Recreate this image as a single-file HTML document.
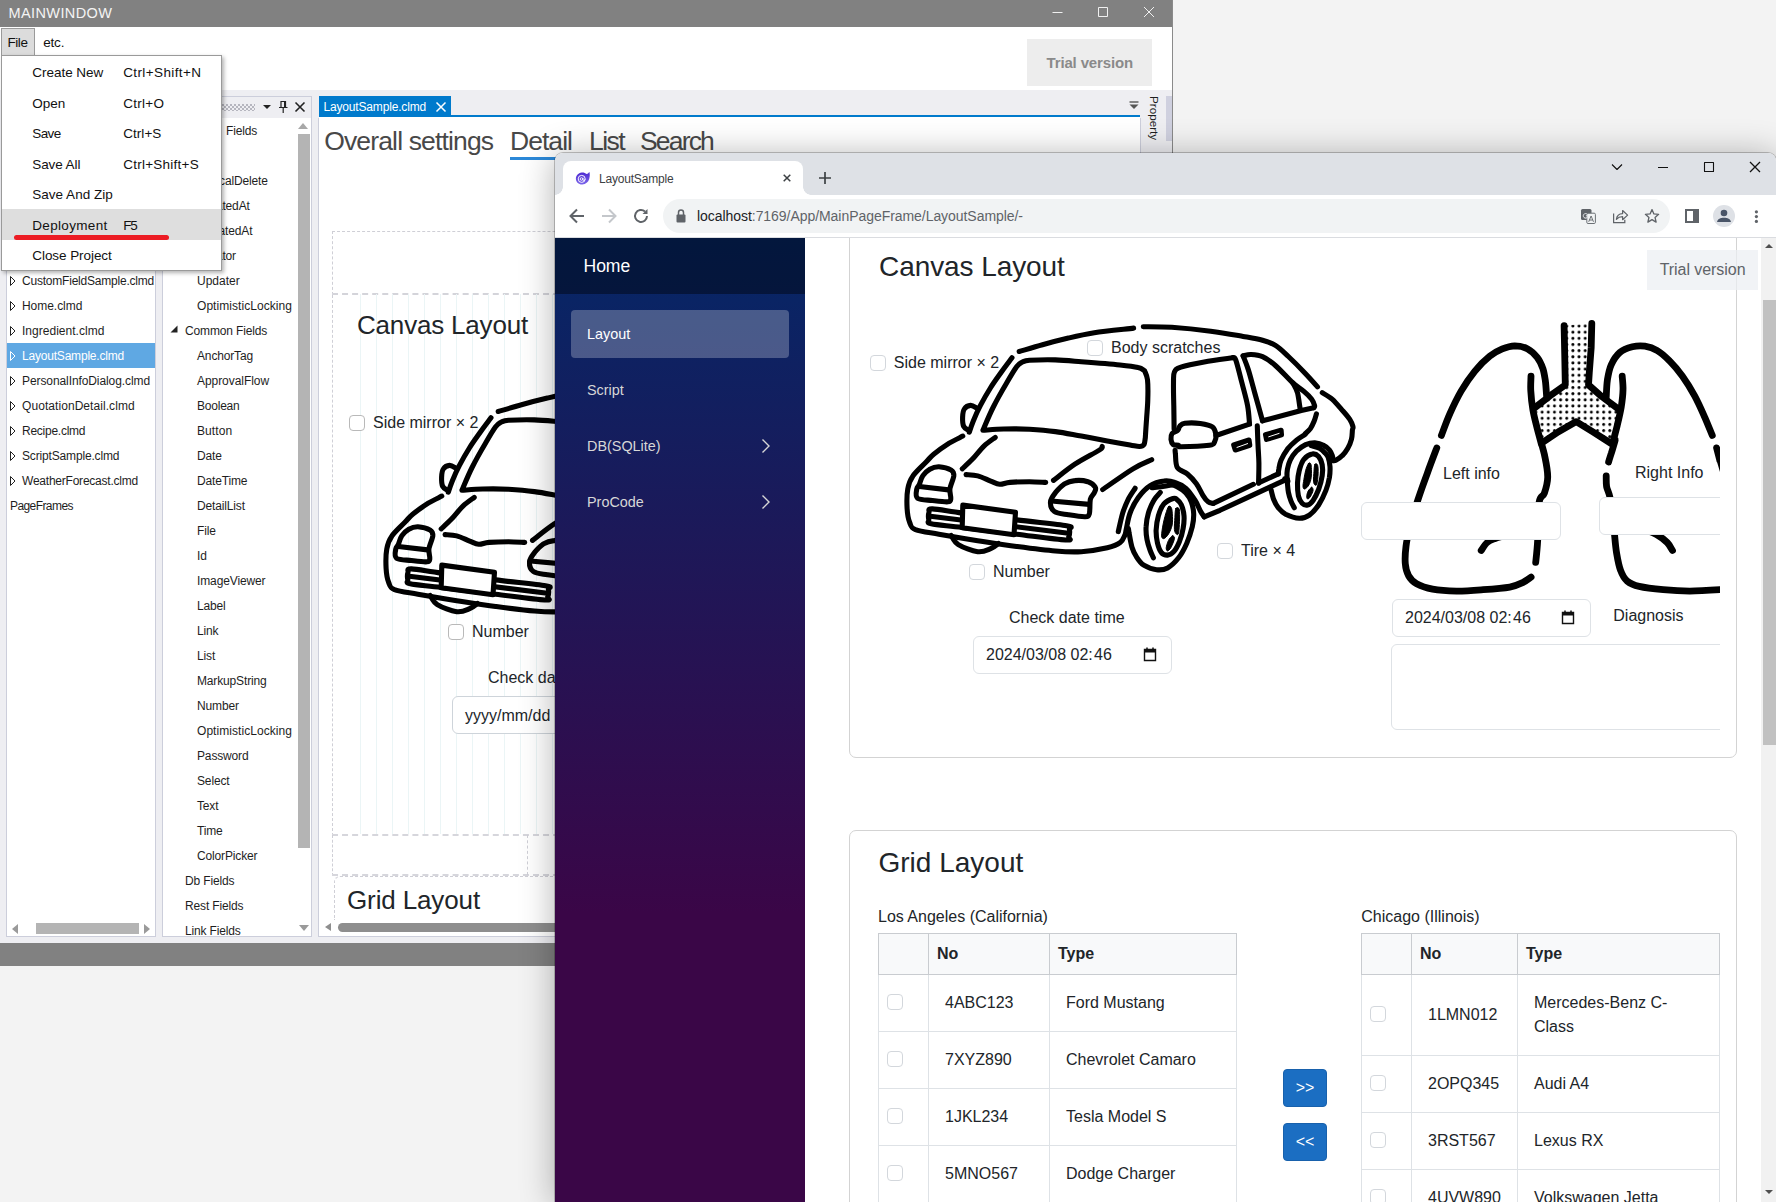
<!DOCTYPE html>
<html lang="en">
<head>
<meta charset="utf-8">
<title>LayoutSample</title>
<style>
*{box-sizing:border-box}
html,body{margin:0;padding:0;overflow:hidden}
body{width:1776px;height:1202px;overflow:hidden;background:#f3f3f3;position:relative;font-family:"Liberation Sans",sans-serif;color:#1e1e1e}
.a{position:absolute}
.t{position:absolute;white-space:nowrap;line-height:1}
/* ---------- WPF window ---------- */
#wpf{position:absolute;left:0;top:0;width:1173px;height:966px;background:#eeeef2;overflow:hidden;border-right:1px solid #8a8a8a}
#wtitle{position:absolute;left:0;top:0;width:1173px;height:27px;background:#818181}
#wmenu{position:absolute;left:0;top:27px;width:1172px;height:63px;background:#fff}
#wstatus{position:absolute;left:0;top:943px;width:1173px;height:23px;background:#818181}
.w{position:absolute;white-space:nowrap;line-height:1;font-size:12px;letter-spacing:-0.15px;color:#1e1e1e}
.m{position:absolute;white-space:nowrap;line-height:1;font-size:13.5px;color:#111}
.panel{position:absolute;background:#fff;border:1px solid #cccedb}
.tri{position:absolute;width:0;height:0;border-style:solid}
/* ---------- Chrome ---------- */
#chrome{position:absolute;left:555px;top:153px;width:1221px;height:1049px;background:#fff;border-radius:8px 8px 0 0;box-shadow:0 3px 34px 1px rgba(0,0,0,.30),0 0 0 1px rgba(0,0,0,.22);overflow:hidden}
#cstrip{position:absolute;left:0;top:0;width:1221px;height:43px;background:#dee1e6}
#ctab{position:absolute;left:9px;top:9px;width:240px;height:34px;background:#fff;border-radius:8px 8px 0 0}
#ctool{position:absolute;left:0;top:43px;width:1221px;height:42px;background:#fff;border-bottom:1px solid #d5d7da}
#curl{position:absolute;left:108px;top:5px;width:1006px;height:32px;border-radius:16px;background:#f1f3f4}
#page{position:absolute;left:0;top:86px;width:1221px;height:964px;background:#fff;overflow:hidden;font-size:16px;color:#212529}
#side{position:absolute;left:0;top:0;width:250px;height:964px;background:linear-gradient(180deg,#052767 0%,#3a0647 70%)}
#sidetop{position:absolute;left:0;top:0;width:250px;height:56px;background:rgba(0,0,0,.4)}
.nav{position:absolute;left:32px;color:#d7d7d7;font-size:14.4px;line-height:1;white-space:nowrap}
.card{position:absolute;border:1px solid #d3d3d3;border-radius:7px;background:#fff}
.cb{position:absolute;width:16px;height:16px;border:1px solid #d3d7dc;border-radius:4px;background:#fff}
.inp{position:absolute;border:1px solid #dee2e6;border-radius:6px;background:#fff}
.p{position:absolute;white-space:nowrap;line-height:1;font-size:16px;color:#212529}
.btn{position:absolute;width:44px;height:38px;background:#1b6ec2;border:1px solid #1861ac;border-radius:4px;color:#fff;font-size:16px;line-height:36px;text-align:center}
table.g{position:absolute;border-collapse:collapse;table-layout:fixed;font-size:16px;color:#212529}
table.g td,table.g th{border:1px solid #dee2e6;padding:0 0 0 16px;text-align:left;vertical-align:middle;line-height:24px}
table.g th{background:#f8f9fa;height:41px;border-color:#c9ccd0;padding-left:8px;font-weight:bold}
table.g tr.r td{height:57px}
table.g .c{padding:0}
</style>
</head>
<body>

<svg width="0" height="0" style="position:absolute"><defs>
<g id="car" fill="none" stroke="#000" stroke-width="5.1" stroke-linecap="round" stroke-linejoin="round">
<path d="M1019.2,351.5 C1023.1,350.4 1034.3,347.0 1042.5,344.8 C1050.7,342.5 1059.8,340.1 1068.4,338.1 C1077.0,336.0 1083.4,334.4 1094.3,332.7 C1105.2,331.1 1127.1,328.9 1133.6,328.1"/>
<path d="M1143.3,326.7 C1148.1,326.8 1160.6,326.6 1171.8,327.3 C1183.0,328.1 1198.8,329.7 1210.7,331.2 C1222.5,332.7 1234.4,334.9 1243.1,336.4 C1251.7,337.9 1257.1,338.7 1262.5,340.3 C1267.9,341.8 1271.1,342.7 1275.4,345.4 C1279.8,348.1 1283.6,352.0 1288.4,356.5 C1293.1,360.9 1299.1,366.9 1303.9,372.0 C1308.8,377.1 1315.3,384.4 1317.5,386.9"/>
<path d="M1322.3,392.7 C1324.0,393.8 1329.2,396.5 1332.4,399.3 C1335.6,402.1 1338.6,406.0 1341.5,409.4 C1344.4,412.7 1347.9,416.5 1349.8,419.4 C1351.7,422.3 1352.5,425.0 1353.0,426.8 C1353.4,428.5 1352.7,427.9 1352.4,430.0 C1352.2,432.1 1352.3,436.1 1351.5,439.1 C1350.7,442.2 1349.4,445.6 1347.8,448.3 C1346.3,451.0 1344.3,453.6 1342.3,455.6 C1340.4,457.6 1337.5,459.4 1335.9,460.2 C1334.4,461.0 1333.7,460.6 1333.2,460.6"/>
<path d="M1333.2,460.6 C1333.0,459.8 1332.9,457.4 1332.3,455.6 C1331.7,453.9 1330.9,451.8 1329.5,450.1 C1328.2,448.5 1326.5,446.8 1324.0,445.6 C1321.6,444.3 1317.9,443.0 1314.9,442.8 C1311.8,442.7 1308.8,443.3 1305.7,444.6 C1302.7,446.0 1299.2,448.5 1296.6,451.0 C1294.0,453.6 1291.7,457.1 1290.2,460.2 C1288.7,463.2 1288.0,466.4 1287.4,469.3 C1286.9,472.2 1286.9,475.6 1287.0,477.6 C1287.1,479.6 1287.8,480.6 1287.9,481.2"/>
<path d="M1316.4,413.9 C1316.0,415.2 1315.1,418.8 1314.1,421.3 C1313.1,423.7 1311.9,426.4 1310.4,428.6 C1308.9,430.7 1305.9,433.1 1304.9,434.1 C1304.0,435.1 1306.2,433.6 1304.8,434.6 C1303.4,435.6 1299.5,437.6 1296.6,440.1 C1293.7,442.5 1290.0,445.9 1287.4,449.2 C1284.9,452.6 1282.5,456.8 1281.0,460.2 C1279.6,463.5 1279.2,467.1 1278.8,469.3 C1278.3,471.6 1278.4,473.2 1278.3,473.9"/>
<path d="M1278.3,473.9 L1260.0,482.2 L1258.6,483.0"/>
<path d="M1287.1,479.1 L1284.7,478.9"/>
<path d="M1012.0,357.7 C1010.4,359.9 1005.9,365.7 1002.3,370.7 C998.8,375.7 994.3,381.7 990.7,387.5 C987.0,393.4 983.2,400.1 980.3,405.7 C977.4,411.3 975.0,416.8 973.2,421.2 C971.4,425.6 969.9,430.4 969.3,432.2"/>
<path d="M977.7,408.5 C976.5,408.0 972.8,405.3 970.6,405.4 C968.4,405.5 965.7,406.9 964.4,408.9 C963.0,410.9 962.7,414.4 962.6,417.3 C962.5,420.2 962.7,424.2 963.7,426.4 C964.7,428.6 967.8,429.6 968.7,430.3"/>
<path d="M982.9,430.3 C984.6,426.4 989.4,414.7 993.3,407.0 C997.2,399.2 1002.3,390.3 1006.2,383.7 C1010.1,377.0 1013.9,370.4 1016.6,366.8 C1019.3,363.2 1021.4,362.7 1022.4,361.9 L1022.4,361.9 C1023.6,361.6 1024.0,360.7 1029.5,360.3 C1035.0,360.0 1046.8,359.7 1055.4,359.9 C1064.1,360.2 1070.6,360.9 1081.3,361.8 C1092.1,362.6 1110.5,364.0 1120.0,365.0 C1129.5,366.0 1134.0,366.6 1138.1,367.6 C1142.2,368.5 1143.5,370.2 1144.6,370.7 L1144.6,370.7 C1145.1,372.2 1146.9,375.0 1147.5,379.8 C1148.0,384.5 1148.0,392.7 1147.8,399.2 C1147.7,405.7 1147.0,412.2 1146.6,418.6 C1146.1,425.1 1145.5,434.8 1145.3,438.1 L1145.3,438.1 C1145.0,439.1 1144.9,443.1 1144.0,444.5 C1143.0,445.9 1141.7,446.4 1139.4,446.5 C1137.1,446.5 1135.4,445.9 1130.1,444.9 C1124.7,444.0 1115.4,442.4 1107.3,440.9 C1099.1,439.4 1090.0,437.7 1081.3,436.1 C1072.7,434.6 1064.1,432.7 1055.4,431.6 C1046.8,430.4 1038.2,429.7 1029.5,429.2 C1020.9,428.8 1011.4,428.8 1003.6,429.0 C995.9,429.2 986.4,430.1 982.9,430.3 Z" fill="#fff"/>
<path d="M962.8,436.1 C960.6,437.3 954.1,440.2 949.2,443.2 C944.4,446.3 937.6,451.1 933.7,454.2 C929.8,457.4 929.4,458.7 925.9,462.3 C922.5,465.9 916.0,471.5 913.0,475.9 C909.9,480.3 908.7,483.5 907.8,488.9 C906.8,494.3 906.8,502.7 907.1,508.3 C907.4,513.9 908.3,519.0 909.7,522.5 C911.1,526.1 910.7,527.7 915.5,529.7 C920.4,531.6 928.5,532.4 938.9,534.2 C949.2,536.0 964.8,538.6 977.7,540.7 C990.7,542.7 1003.6,544.8 1016.6,546.5 C1029.5,548.2 1044.6,550.2 1055.4,551.0 C1066.2,551.9 1072.7,552.2 1081.3,551.7 C1090.0,551.1 1100.8,549.3 1107.3,547.8 C1113.7,546.3 1117.2,544.9 1120.2,542.6 C1123.2,540.3 1124.5,535.6 1125.4,534.2"/>
<path d="M995.2,437.4 C993.4,438.8 988.0,442.2 984.2,445.8 C980.4,449.4 976.2,455.2 972.5,459.1 C968.9,462.9 963.9,467.2 962.2,468.8"/>
<path d="M1102.1,446.5 C1101.6,447.1 1104.0,447.0 1099.5,450.0 C1094.9,453.0 1082.5,459.2 1074.9,464.2 C1067.2,469.3 1057.1,477.7 1053.5,480.4"/>
<path d="M966.1,474.6 C968.0,474.8 973.6,474.8 977.7,475.9 C981.8,477.0 987.0,479.7 990.7,481.1 C994.3,482.5 996.5,484.1 999.7,484.3 C1003.0,484.5 1005.1,482.8 1010.1,482.4 C1015.1,482.0 1023.6,481.7 1029.5,481.7 C1035.5,481.7 1043.0,482.3 1045.7,482.4"/>
<path d="M1151.7,459.7 C1148.6,461.2 1141.1,463.8 1133.0,468.8 C1124.8,473.7 1107.8,486.1 1102.7,489.5"/>
<path d="M919.4,484.3 C920.4,482.2 920.9,478.4 922.7,475.9 C924.4,473.4 927.1,470.7 929.8,469.2 C932.5,467.7 935.3,466.7 938.9,466.8 C942.4,467.0 948.7,468.6 951.2,470.1 C953.6,471.6 954.0,472.8 953.8,475.9 C953.5,479.0 950.4,485.1 949.9,488.9 C949.4,492.6 951.1,496.4 950.8,498.6 C950.5,500.7 951.0,501.5 947.9,501.8 C944.9,502.1 937.5,501.1 932.4,500.5 C927.3,499.9 920.1,500.1 917.5,498.2 C914.9,496.2 916.5,491.2 916.8,488.9 C917.2,486.6 918.5,486.5 919.4,484.3Z"/>
<path d="M919.4,486.5 L948.6,489.9"/>
<path d="M1050.5,501.8 C1050.7,498.7 1053.1,495.7 1055.4,492.7 C1057.8,489.8 1061.3,486.0 1064.5,483.9 C1067.7,481.9 1071.0,480.9 1074.9,480.6 C1078.8,480.2 1084.4,480.6 1087.8,481.7 C1091.2,482.9 1094.3,485.5 1095.3,487.3 C1096.4,489.1 1095.1,490.8 1094.3,492.7 C1093.5,494.7 1091.2,495.8 1090.4,499.2 C1089.6,502.7 1090.2,510.6 1089.4,513.5 C1088.5,516.4 1088.7,516.5 1085.2,516.7 C1081.7,516.9 1073.5,515.6 1068.4,514.8 C1063.3,513.9 1057.4,513.7 1054.4,511.5 C1051.4,509.4 1050.3,504.9 1050.5,501.8Z"/>
<path d="M1054.1,501.2 L1089.1,504.4"/>
<path d="M932.4,508.9 C937.9,509.1 948.1,511.2 962.2,513.1 C976.2,514.9 999.2,517.8 1016.6,519.9 C1034.0,522.1 1057.6,524.2 1066.5,525.8 C1075.3,527.3 1069.0,527.4 1069.4,529.3 C1069.8,531.2 1069.4,535.3 1068.8,537.0 C1068.1,538.8 1074.2,540.5 1065.5,540.0 C1056.8,539.6 1033.8,536.3 1016.6,534.2 C999.4,532.1 976.4,529.2 962.2,527.5 C948.0,525.7 936.9,525.1 931.3,523.8 C925.8,522.6 929.1,521.9 928.8,519.9 C928.4,518.0 928.4,514.0 929.0,512.2 C929.6,510.3 926.9,508.8 932.4,508.9Z"/>
<path d="M930.4,516.3 L1068.4,533.2"/>
<path d="M962.8,505.1 L1015.5,512.2 L1014.0,534.8 L962.2,527.7Z" fill="#fff"/>
<path d="M951.2,535.5 C952.4,537.0 953.9,541.9 958.3,544.6 C962.7,547.3 972.3,551.0 977.7,551.7 C983.1,552.4 987.2,550.1 990.7,548.7 C994.1,547.3 997.2,544.4 998.4,543.5"/>
<path d="M1135.1,488.3 C1134.0,490.1 1130.3,495.2 1128.2,499.3 C1126.2,503.4 1124.4,507.6 1122.7,513.0 C1121.1,518.4 1119.0,528.5 1118.3,531.6"/>
<path d="M1125.4,534.2 C1125.6,533.3 1125.6,532.1 1126.4,528.6 C1127.2,525.0 1128.1,518.2 1130.1,513.0 C1132.0,507.8 1134.9,502.0 1138.3,497.4 C1141.7,492.9 1145.9,488.3 1150.2,485.6 C1154.5,482.8 1159.8,481.5 1163.9,481.0 C1168.0,480.4 1171.2,481.1 1174.9,482.4 C1178.6,483.6 1182.5,485.3 1185.9,488.3 C1189.2,491.3 1192.6,496.4 1195.0,500.2 C1197.5,504.0 1199.0,508.4 1200.5,511.2 C1202.0,513.9 1203.6,515.9 1204.2,516.8"/>
<path d="M1204.2,516.8 L1220.0,510.3 L1287.1,479.1"/>
<path d="M1128.4,528.6 C1128.5,529.3 1128.6,530.1 1129.1,533.1 C1129.7,536.2 1130.7,542.9 1131.9,546.9 C1133.1,550.8 1134.5,553.9 1136.5,556.9 C1138.5,560.0 1140.4,563.0 1143.8,565.2 C1147.1,567.3 1152.6,569.3 1156.6,569.7 C1160.6,570.2 1163.9,569.9 1167.6,567.9 C1171.2,565.9 1175.4,561.9 1178.6,557.8 C1181.8,553.7 1184.5,548.4 1186.8,543.2 C1189.1,538.0 1191.1,531.6 1192.3,526.7 C1193.4,521.8 1193.8,518.0 1193.7,513.9 C1193.5,509.8 1192.7,505.5 1191.4,502.0 C1190.1,498.5 1188.3,495.5 1185.9,492.9 C1183.4,490.3 1179.5,488.0 1176.7,486.5 C1174.0,485.0 1170.6,484.3 1169.4,483.9"/>
<path d="M1152.0,487.6 C1153.5,487.4 1158.0,487.2 1161.2,486.7 C1164.4,486.3 1169.6,485.4 1171.2,485.1"/>
<path d="M1160.3,492.4 C1159.2,493.7 1155.8,496.8 1153.9,500.2 C1151.9,503.6 1149.7,508.6 1148.4,513.0 C1147.1,517.4 1146.3,522.3 1146.1,526.7 C1145.8,531.1 1146.3,535.6 1147.0,539.5 C1147.7,543.5 1149.1,547.5 1150.2,550.5 C1151.3,553.6 1152.9,556.6 1153.4,557.8"/>
<path d="M1173.1,498.5 C1170.9,499.3 1166.4,501.0 1163.9,503.9 C1161.5,506.7 1159.7,511.3 1158.4,515.7 C1157.1,520.2 1156.3,525.8 1156.1,530.4 C1156.0,535.0 1156.7,539.5 1157.5,543.2 C1158.4,546.9 1159.5,550.4 1161.2,552.3 C1162.8,554.3 1165.4,555.2 1167.6,555.1 C1169.7,554.9 1172.0,553.7 1174.0,551.4 C1176.0,549.1 1177.9,545.2 1179.5,541.4 C1181.0,537.6 1182.4,532.8 1183.1,528.6 C1183.9,524.3 1184.3,519.7 1184.0,515.7 C1183.7,511.8 1182.5,507.5 1181.3,504.8 C1180.1,502.0 1178.1,500.3 1176.7,499.3 C1175.4,498.2 1175.2,497.8 1173.1,498.5Z"/>
<path d="M1168.5,506.6 C1167.6,507.7 1166.7,510.9 1165.7,513.9 C1164.8,517.0 1163.7,521.2 1163.0,524.9 C1162.3,528.6 1161.5,533.6 1161.6,535.9 C1161.8,538.2 1162.8,538.9 1163.9,538.6 C1165.1,538.3 1167.1,536.3 1168.5,534.0 C1169.9,531.8 1171.5,528.2 1172.2,524.9 C1172.8,521.5 1172.5,516.8 1172.3,513.9 C1172.2,511.0 1171.9,508.7 1171.2,507.5 C1170.6,506.3 1169.4,505.5 1168.5,506.6Z" stroke-width="1" fill="#000"/>
<path d="M1175.8,508.4 C1175.1,509.8 1175.1,514.1 1174.9,517.6 C1174.7,521.1 1174.2,526.7 1174.4,529.5 C1174.7,532.2 1175.6,533.4 1176.3,534.0 C1177.0,534.7 1178.0,535.3 1178.6,533.1 C1179.1,531.0 1179.3,525.2 1179.5,521.2 C1179.6,517.3 1179.9,511.5 1179.3,509.3 C1178.7,507.2 1176.5,507.1 1175.8,508.4Z" stroke-width="1" fill="#000"/>
<path d="M1172.2,535.9 C1171.2,536.4 1169.5,538.5 1168.5,540.4 C1167.5,542.4 1166.4,546.0 1166.2,547.8 C1166.1,549.5 1166.8,551.0 1167.6,551.0 C1168.3,551.0 1169.7,549.5 1170.8,547.8 C1171.8,546.0 1173.4,542.2 1174.0,540.4 C1174.6,538.7 1174.7,538.0 1174.4,537.2 C1174.1,536.5 1173.1,535.3 1172.2,535.9Z" stroke-width="1" fill="#000"/>
<path d="M1175.1,450.4 C1175.1,450.9 1175.1,451.0 1175.4,453.9 C1175.8,456.7 1175.3,464.1 1177.3,467.5 C1179.2,470.8 1184.2,471.3 1187.4,474.0 C1190.6,476.7 1193.8,480.1 1196.4,483.7 C1199.0,487.2 1201.0,492.3 1202.9,495.3 C1204.8,498.4 1206.4,500.5 1208.1,501.8 C1209.8,503.2 1212.4,503.1 1213.3,503.4"/>
<path d="M1213.3,503.4 L1253.4,484.3"/>
<path d="M1257.3,425.8 C1257.4,428.9 1257.7,438.3 1258.0,444.5 C1258.2,450.7 1258.8,456.5 1258.9,463.0 C1259.0,469.4 1258.6,479.7 1258.6,483.0"/>
<path d="M1232.7,357.7 C1227.9,358.4 1212.8,360.3 1204.2,361.9 C1195.6,363.4 1185.8,365.4 1180.9,367.1 C1175.9,368.8 1175.6,369.4 1174.4,372.0 C1173.2,374.5 1173.6,376.7 1173.5,382.4 C1173.4,388.0 1173.6,397.9 1173.8,405.7 C1173.9,413.4 1174.1,425.1 1174.1,429.0"/>
<path d="M1232.7,357.7 C1233.2,358.2 1234.4,356.2 1235.9,360.3 C1237.4,364.4 1239.8,374.8 1241.8,382.4 C1243.7,389.9 1246.3,398.8 1247.6,405.7 C1248.9,412.6 1249.2,420.8 1249.5,423.8"/>
<path d="M1249.5,424.2 L1215.9,435.5"/>
<path d="M1215.9,434.8 C1215.5,432.3 1215.2,428.9 1212.6,427.0 C1210.0,425.2 1205.0,424.2 1200.3,423.5 C1195.7,422.9 1188.2,422.9 1184.8,423.3 C1181.4,423.7 1181.0,424.9 1179.8,426.1 C1178.7,427.3 1178.9,429.3 1177.6,430.5 C1176.3,431.8 1173.2,432.1 1172.1,433.5 C1171.0,435.0 1170.9,437.5 1171.0,439.4 C1171.2,441.2 1171.9,443.5 1173.1,444.5 C1174.3,445.5 1177.0,444.9 1178.3,445.3 C1179.6,445.7 1176.0,446.7 1181.1,446.7 C1186.3,446.7 1203.8,446.1 1209.4,445.3 C1214.9,444.5 1213.5,443.7 1214.6,441.9 C1215.6,440.2 1216.2,437.3 1215.9,434.8Z"/>
<path d="M1243.1,355.8 C1244.4,355.6 1247.6,354.4 1250.8,354.5 C1254.1,354.7 1258.4,354.9 1262.5,356.7 C1266.6,358.5 1270.5,361.2 1275.4,365.5 C1280.4,369.8 1287.5,378.0 1292.3,382.4 C1297.0,386.7 1300.7,388.6 1303.9,391.4 C1307.2,394.2 1309.9,396.8 1311.7,399.2 C1313.5,401.6 1314.2,404.2 1314.6,405.7 C1314.9,407.1 1313.8,407.4 1313.7,407.7"/>
<path d="M1313.7,407.7 L1301.3,410.5 L1262.5,420.8"/>
<path d="M1262.5,420.8 C1261.2,416.1 1257.1,401.3 1254.7,392.7 C1252.3,384.1 1250.2,375.6 1248.2,369.4 C1246.3,363.3 1243.9,358.1 1243.1,355.8"/>
<path d="M1292.9,383.0 C1293.7,384.6 1296.3,388.5 1297.5,392.7 C1298.6,397.0 1299.6,405.9 1300.1,408.5"/>
<path d="M1233.7,444.9 L1249.0,440.0 L1249.8,445.3 L1235.3,450.0Z" fill="#000"/>
<path d="M1237.0,447.4 L1247.6,443.6" stroke-width="1" stroke="#fff"/>
<path d="M1265.5,434.6 L1281.1,430.3 L1281.5,434.9 L1266.5,439.4Z" fill="#000"/>
<path d="M1268.7,436.8 L1279.1,433.4" stroke-width="1" stroke="#fff"/>
<path d="M1311.2,445.7 C1312.6,446.2 1317.2,447.1 1319.5,448.3 C1321.8,449.5 1323.5,451.3 1325.0,452.9 C1326.4,454.4 1327.3,455.2 1328.2,457.4 C1329.0,459.7 1329.8,463.2 1330.0,466.6 C1330.2,470.0 1330.0,473.6 1329.4,477.6 C1328.7,481.5 1327.7,485.8 1325.9,490.4 C1324.1,495.0 1321.3,500.9 1318.6,505.0 C1315.8,509.1 1312.6,512.9 1309.4,515.1 C1306.2,517.3 1303.3,518.4 1299.3,518.3 C1295.4,518.1 1289.1,515.9 1285.6,514.2 C1282.1,512.4 1280.3,510.2 1278.3,507.8 C1276.3,505.3 1274.9,502.6 1273.7,499.5 C1272.5,496.5 1271.4,491.1 1271.0,489.5"/>
<path d="M1287.4,483.1 C1287.6,484.6 1287.8,489.2 1288.4,492.2 C1289.0,495.3 1290.1,498.8 1291.1,501.4 C1292.1,504.0 1293.8,506.7 1294.3,507.8"/>
<path d="M1312.2,454.0 C1309.7,454.4 1306.1,456.6 1303.9,459.3 C1301.8,462.0 1300.4,466.3 1299.3,470.3 C1298.3,474.2 1297.7,478.8 1297.5,483.1 C1297.4,487.3 1297.7,492.5 1298.4,495.9 C1299.2,499.2 1300.6,501.7 1302.1,503.2 C1303.6,504.7 1305.7,505.5 1307.6,505.0 C1309.4,504.6 1311.2,503.0 1313.1,500.4 C1314.9,497.9 1317.0,493.6 1318.6,489.5 C1320.1,485.4 1321.6,479.9 1322.2,475.7 C1322.8,471.6 1322.8,468.0 1322.2,464.8 C1321.6,461.6 1320.2,458.3 1318.6,456.5 C1316.9,454.7 1314.6,453.5 1312.2,454.0Z"/>
<path d="M1308.5,463.4 C1307.7,464.5 1306.5,467.6 1305.7,470.3 C1305.0,472.9 1304.4,476.7 1303.9,479.4 C1303.5,482.2 1302.8,485.1 1303.0,486.7 C1303.2,488.3 1303.8,489.3 1304.8,489.0 C1305.8,488.7 1307.9,486.8 1308.9,484.9 C1310.0,483.0 1310.8,480.2 1311.2,477.6 C1311.6,475.0 1311.5,471.6 1311.4,469.3 C1311.3,467.1 1311.3,464.8 1310.8,463.9 C1310.3,462.9 1309.3,462.3 1308.5,463.4Z" stroke-width="1" fill="#000"/>
<path d="M1314.9,464.3 C1314.3,465.3 1314.2,468.4 1314.0,471.2 C1313.8,474.0 1313.4,478.9 1313.5,481.2 C1313.7,483.5 1314.3,484.4 1314.9,484.9 C1315.5,485.4 1316.4,485.8 1316.9,484.0 C1317.4,482.2 1318.0,477.0 1318.1,473.9 C1318.2,470.8 1318.2,466.8 1317.6,465.2 C1317.1,463.6 1315.5,463.3 1314.9,464.3Z" stroke-width="1" fill="#000"/>
<path d="M1311.7,487.2 C1310.9,487.3 1308.9,489.7 1308.0,491.3 C1307.2,492.9 1306.7,495.5 1306.7,496.8 C1306.7,498.1 1307.3,499.2 1308.0,499.1 C1308.7,498.9 1309.9,497.3 1310.8,495.9 C1311.6,494.4 1312.9,491.8 1313.1,490.4 C1313.2,488.9 1312.5,487.0 1311.7,487.2Z" stroke-width="1" fill="#000"/>
</g></defs></svg>
<div id="wpf">
<div id="wtitle"></div>
<div class="t" style="left:8.4px;top:5.9px;font-size:14.5px;letter-spacing:0.413px;color:#f4f4f4;">MAINWINDOW</div>
<svg class="a" style="left:1040px;top:0" width="130" height="27" fill="none" stroke="#f0f0f0" stroke-width="1"><path d="M12.5,12.5h10M58.5,7.5h9v9h-9zM104,7l10,10M114,7l-10,10"/></svg>
<div id="wmenu"></div>
<div class="a" style="left:1027px;top:39px;width:125px;height:47px;background:#ededed"></div>
<div class="t" style="left:1046.5px;top:55.3px;font-size:15px;letter-spacing:-0.144px;color:#8a8a8a;font-weight:bold;">Trial version</div>
<div class="a" style="left:1px;top:28px;width:34px;height:28px;background:#dcdcdc;border:1px solid #9a9a9a"></div>
<div class="m" style="left:7.4px;top:35.9px;font-size:13.5px;letter-spacing:-0.413px;">File</div>
<div class="m" style="left:43.2px;top:35.9px;font-size:13.5px;letter-spacing:-0.190px;">etc.</div>
<div class="panel" style="left:6px;top:96px;width:150px;height:841px"></div>
<div class="a" style="left:7px;top:343px;width:148px;height:25px;background:#5fa8e3"></div>
<div class="w" style="left:22.0px;top:274.8px;font-size:12px;letter-spacing:-0.214px;">CustomFieldSample.clmd</div>
<svg class="a" style="left:9px;top:275px" width="8" height="12" fill="none" stroke="#222" stroke-width="1"><path d="M1.5,1.5v9l4.5,-4.5z"/></svg>
<div class="w" style="left:22.0px;top:299.8px;font-size:12px;letter-spacing:-0.042px;">Home.clmd</div>
<svg class="a" style="left:9px;top:300px" width="8" height="12" fill="none" stroke="#222" stroke-width="1"><path d="M1.5,1.5v9l4.5,-4.5z"/></svg>
<div class="w" style="left:22.0px;top:324.8px;font-size:12px;letter-spacing:0.024px;">Ingredient.clmd</div>
<svg class="a" style="left:9px;top:325px" width="8" height="12" fill="none" stroke="#222" stroke-width="1"><path d="M1.5,1.5v9l4.5,-4.5z"/></svg>
<div class="w" style="left:22.0px;top:349.8px;font-size:12px;letter-spacing:-0.199px;color:#fff;">LayoutSample.clmd</div>
<svg class="a" style="left:9px;top:350px" width="8" height="12" fill="none" stroke="#fff" stroke-width="1"><path d="M1.5,1.5v9l4.5,-4.5z"/></svg>
<div class="w" style="left:22.0px;top:374.8px;font-size:12px;letter-spacing:-0.090px;">PersonalInfoDialog.clmd</div>
<svg class="a" style="left:9px;top:375px" width="8" height="12" fill="none" stroke="#222" stroke-width="1"><path d="M1.5,1.5v9l4.5,-4.5z"/></svg>
<div class="w" style="left:22.0px;top:399.8px;font-size:12px;letter-spacing:0.066px;">QuotationDetail.clmd</div>
<svg class="a" style="left:9px;top:400px" width="8" height="12" fill="none" stroke="#222" stroke-width="1"><path d="M1.5,1.5v9l4.5,-4.5z"/></svg>
<div class="w" style="left:22.0px;top:424.8px;font-size:12px;letter-spacing:-0.257px;">Recipe.clmd</div>
<svg class="a" style="left:9px;top:425px" width="8" height="12" fill="none" stroke="#222" stroke-width="1"><path d="M1.5,1.5v9l4.5,-4.5z"/></svg>
<div class="w" style="left:22.0px;top:449.8px;font-size:12px;letter-spacing:-0.161px;">ScriptSample.clmd</div>
<svg class="a" style="left:9px;top:450px" width="8" height="12" fill="none" stroke="#222" stroke-width="1"><path d="M1.5,1.5v9l4.5,-4.5z"/></svg>
<div class="w" style="left:22.0px;top:474.8px;font-size:12px;letter-spacing:-0.224px;">WeatherForecast.clmd</div>
<svg class="a" style="left:9px;top:475px" width="8" height="12" fill="none" stroke="#222" stroke-width="1"><path d="M1.5,1.5v9l4.5,-4.5z"/></svg>
<div class="w" style="left:10.0px;top:499.8px;font-size:12px;letter-spacing:-0.580px;">PageFrames</div>
<div class="a" style="left:36px;top:923px;width:103px;height:11px;background:#b4b4b4"></div>
<div class="tri" style="left:12px;top:924px;border-width:5px 6px 5px 0;border-color:transparent #9a9a9a transparent transparent"></div>
<div class="tri" style="left:144px;top:924px;border-width:5px 0 5px 6px;border-color:transparent transparent transparent #9a9a9a"></div>
<div class="panel" style="left:162px;top:96px;width:150px;height:841px"></div>
<div class="a" style="left:163px;top:97px;width:148px;height:21px;background:#eeeef2"></div>
<div class="a" style="left:222px;top:104px;width:33px;height:7px;background-image:radial-gradient(circle at 1px 1px,#b4b4bd 0.7px,transparent 1px),radial-gradient(circle at 3px 3px,#b4b4bd 0.7px,transparent 1px);background-size:4px 4px"></div>
<div class="tri" style="left:262.5px;top:104.5px;border-width:4.5px 4.5px 0 4.5px;border-color:#222 transparent transparent transparent"></div>
<svg class="a" style="left:277px;top:100px" width="12" height="14" fill="none" stroke="#222" stroke-width="1.2"><path d="M4,1.5h4.5v6h-4.5zM2,7.5h8.5M6.2,7.5v5.5M7.6,1.5v6"/></svg>
<svg class="a" style="left:294px;top:101px" width="12" height="12" fill="none" stroke="#222" stroke-width="1.6"><path d="M1.5,1.5l9,9M10.5,1.5l-9,9"/></svg>
<div class="a" style="left:163px;top:118px;width:148px;height:818px;overflow:hidden">
<div class="w" style="left:63.0px;top:6.8px;font-size:12px;">Fields</div>
<div class="w" style="left:34.0px;top:31.8px;font-size:12px;">Id</div>
<div class="w" style="left:34.0px;top:56.8px;font-size:12px;">LogicalDelete</div>
<div class="w" style="left:34.0px;top:81.8px;font-size:12px;">CreatedAt</div>
<div class="w" style="left:34.0px;top:106.8px;font-size:12px;">UpdatedAt</div>
<div class="w" style="left:34.0px;top:131.8px;font-size:12px;">Creator</div>
<div class="w" style="left:34.0px;top:156.8px;font-size:12px;letter-spacing:0.015px;">Updater</div>
<div class="w" style="left:34.0px;top:181.8px;font-size:12px;letter-spacing:0.057px;">OptimisticLocking</div>
<div class="w" style="left:22.0px;top:206.8px;font-size:12px;letter-spacing:-0.148px;">Common Fields</div>
<div class="w" style="left:34.0px;top:231.8px;font-size:12px;">AnchorTag</div>
<div class="w" style="left:34.0px;top:256.8px;font-size:12px;letter-spacing:-0.058px;">ApprovalFlow</div>
<div class="w" style="left:34.0px;top:281.8px;font-size:12px;letter-spacing:-0.220px;">Boolean</div>
<div class="w" style="left:34.0px;top:306.8px;font-size:12px;letter-spacing:0.084px;">Button</div>
<div class="w" style="left:34.0px;top:331.8px;font-size:12px;">Date</div>
<div class="w" style="left:34.0px;top:356.8px;font-size:12px;">DateTime</div>
<div class="w" style="left:34.0px;top:381.8px;font-size:12px;">DetailList</div>
<div class="w" style="left:34.0px;top:406.8px;font-size:12px;">File</div>
<div class="w" style="left:34.0px;top:431.8px;font-size:12px;">Id</div>
<div class="w" style="left:34.0px;top:456.8px;font-size:12px;letter-spacing:-0.120px;">ImageViewer</div>
<div class="w" style="left:34.0px;top:481.8px;font-size:12px;">Label</div>
<div class="w" style="left:34.0px;top:506.8px;font-size:12px;">Link</div>
<div class="w" style="left:34.0px;top:531.8px;font-size:12px;">List</div>
<div class="w" style="left:34.0px;top:556.8px;font-size:12px;">MarkupString</div>
<div class="w" style="left:34.0px;top:581.8px;font-size:12px;">Number</div>
<div class="w" style="left:34.0px;top:606.8px;font-size:12px;letter-spacing:0.057px;">OptimisticLocking</div>
<div class="w" style="left:34.0px;top:631.8px;font-size:12px;">Password</div>
<div class="w" style="left:34.0px;top:656.8px;font-size:12px;">Select</div>
<div class="w" style="left:34.0px;top:681.8px;font-size:12px;">Text</div>
<div class="w" style="left:34.0px;top:706.8px;font-size:12px;">Time</div>
<div class="w" style="left:34.0px;top:731.8px;font-size:12px;">ColorPicker</div>
<div class="w" style="left:22.0px;top:756.8px;font-size:12px;">Db Fields</div>
<div class="w" style="left:22.0px;top:781.8px;font-size:12px;">Rest Fields</div>
<div class="w" style="left:22.0px;top:806.8px;font-size:12px;">Link Fields</div>
</div>
<svg class="a" style="left:169px;top:324px" width="10" height="10"><path d="M8.5,1.5v7h-7z" fill="#222"/></svg>
<div class="a" style="left:298px;top:134px;width:12px;height:714px;background:#b4b4b4"></div>
<div class="tri" style="left:298.2px;top:123px;border-width:0 5.8px 6px 5.8px;border-color:transparent transparent #a8a8a8 transparent"></div>
<div class="tri" style="left:298.5px;top:925px;border-width:6px 5.5px 0 5.5px;border-color:#9a9a9a transparent transparent transparent"></div>
<div class="a" style="left:319px;top:96px;width:132px;height:21px;background:#007acc"></div>
<div class="w" style="left:323.5px;top:101.0px;font-size:12px;letter-spacing:-0.170px;color:#fff;">LayoutSample.clmd</div>
<svg class="a" style="left:435px;top:101px" width="12" height="12" fill="none" stroke="#fff" stroke-width="1.5"><path d="M1.5,1.5l9,9M10.5,1.5l-9,9"/></svg>
<div class="a" style="left:319px;top:115px;width:821px;height:2px;background:#007acc"></div><div class="a" style="left:319px;top:117px;width:821px;height:1px;background:#fff"></div>
<div class="a" style="left:318px;top:118px;width:823px;height:819px;background:#fff;border:1px solid #cccedb;border-top:none;overflow:hidden" id="doc">
<div class="t" style="left:5.2px;top:9.6px;font-size:26.5px;letter-spacing:-0.852px;color:#484848;">Overall settings</div>
<div class="t" style="left:191.0px;top:9.6px;font-size:26.5px;letter-spacing:-0.959px;color:#484848;">Detail</div>
<div class="t" style="left:270.0px;top:9.6px;font-size:26.5px;letter-spacing:-1.560px;color:#484848;">List</div>
<div class="t" style="left:321.0px;top:9.6px;font-size:26.5px;letter-spacing:-1.828px;color:#484848;">Search</div>
<div class="a" style="left:191px;top:38.6px;width:62px;height:3.2px;background:#2b88d8"></div>
<div class="a" style="left:13px;top:113px;width:820px;height:64px;border:1px dashed #cfcfd6;border-right:none;border-bottom:2px dashed #d4d4da"></div>
<div class="a" style="left:13px;top:177px;width:820px;height:540.5px;border-left:1px dashed #cfcfd6;border-bottom:2px dashed #d6d6dc"></div>
<div class="a" style="left:30px;top:176px;width:800px;height:540px;background-image:repeating-linear-gradient(90deg,transparent 0,transparent 15px,#ebf5f6 15px,#ebf5f6 16px);background-position:-4px 0"></div>
<div class="a" style="left:13px;top:717px;width:820px;height:40.5px;border-left:1px dashed #cfcfd6;border-bottom:2px dashed #d6d6dc"></div>
<div class="a" style="left:208px;top:717px;width:1px;height:40px;border-left:1px dashed #cfcfd6"></div>
<div class="a" style="left:15px;top:758px;width:820px;height:44px;border:1px dashed #cfcfd6;border-radius:6px 0 0 0;border-right:none;border-bottom:none"></div>
<div class="t" style="left:38.0px;top:193.6px;font-size:26px;letter-spacing:-0.188px;color:#212529;">Canvas Layout</div>
<div class="t" style="left:28.0px;top:769.0px;font-size:26px;letter-spacing:-0.128px;color:#212529;">Grid Layout</div>
<svg class="a" style="left:0;top:0" width="300" height="820" viewBox="319 118 300 820"><use href="#car" transform="translate(-521,60)"/></svg>
<div class="cb" style="left:30px;top:297px;border-color:#b9b9b9"></div>
<div class="p" style="left:54.0px;top:296.7px;font-size:16px;">Side mirror × 2</div>
<div class="cb" style="left:129px;top:506px;border-color:#b9b9b9"></div>
<div class="p" style="left:153.0px;top:505.9px;font-size:16px;">Number</div>
<div class="p" style="left:169.0px;top:551.8px;font-size:16px;">Check date time</div>
<div class="inp" style="left:133px;top:578px;width:199px;height:38px;border-color:#ced4da"></div>
<div class="p" style="left:146.0px;top:589.5px;font-size:16px;">yyyy/mm/dd --:--</div>
<div class="a" style="left:19px;top:805px;width:800px;height:9px;background:#8e8e8e;border-radius:4.5px 0 0 4.5px"></div>
<div class="tri" style="left:6px;top:805px;border-width:4.5px 6px 4.5px 0;border-color:transparent #8e8e8e transparent transparent"></div>
</div>
<svg class="a" style="left:1129px;top:100px" width="10" height="10"><path d="M0.5,2h9" stroke="#555" stroke-width="1.4"/><path d="M0.5,4.5h9l-4.5,4.5z" fill="#555"/></svg>
<div class="w" style="left:1148.5px;top:96px;font-size:11.7px;writing-mode:vertical-rl;letter-spacing:0">Property</div>
<div class="a" style="left:1166px;top:96px;width:5.6px;height:44.5px;background:#cfd0df"></div>
<div id="wstatus"></div>
<div class="a" style="left:1px;top:55px;width:221px;height:216px;background:#fff;border:1px solid #9a9a9a;box-shadow:2px 2px 4px rgba(0,0,0,.3)"></div>
<div class="a" style="left:2px;top:209px;width:219px;height:31px;background:#dedede"></div>
<div class="m" style="left:32.3px;top:66.1px;font-size:13.5px;letter-spacing:-0.028px;">Create New</div>
<div class="m" style="left:123.2px;top:66.1px;font-size:13.5px;letter-spacing:0.389px;">Ctrl+Shift+N</div>
<div class="m" style="left:32.3px;top:96.6px;font-size:13.5px;letter-spacing:0.019px;">Open</div>
<div class="m" style="left:123.2px;top:96.6px;font-size:13.5px;letter-spacing:0.270px;">Ctrl+O</div>
<div class="m" style="left:32.3px;top:127.2px;font-size:13.5px;letter-spacing:-0.618px;">Save</div>
<div class="m" style="left:123.2px;top:127.2px;font-size:13.5px;letter-spacing:0.053px;">Ctrl+S</div>
<div class="m" style="left:32.3px;top:157.7px;font-size:13.5px;letter-spacing:-0.098px;">Save All</div>
<div class="m" style="left:123.2px;top:157.7px;font-size:13.5px;letter-spacing:0.243px;">Ctrl+Shift+S</div>
<div class="m" style="left:32.3px;top:188.3px;font-size:13.5px;letter-spacing:0.008px;">Save And Zip</div>
<div class="m" style="left:32.3px;top:218.8px;font-size:13.5px;letter-spacing:0.326px;">Deployment</div>
<div class="m" style="left:123.2px;top:218.8px;font-size:13.5px;letter-spacing:-1.127px;">F5</div>
<div class="m" style="left:32.3px;top:249.4px;font-size:13.5px;letter-spacing:-0.068px;">Close Project</div>
<div class="a" style="left:14px;top:234.8px;width:155px;height:5px;border-radius:2.5px;background:#ec1c24"></div>
</div>
<div id="chrome"><div class="a" style="left:-555px;top:-153px;width:1776px;height:1202px">
<div class="a" style="left:555px;top:152px;width:1221px;height:43px;background:#dee1e6"></div>
<div class="a" style="left:563px;top:161px;width:240px;height:34px;background:#fff;border-radius:8px 8px 0 0"></div>
<div class="a" style="left:555px;top:187px;width:8px;height:8px;background:radial-gradient(circle at 0 0,#dee1e6 7.5px,#fff 8px)"></div>
<div class="a" style="left:803px;top:187px;width:8px;height:8px;background:radial-gradient(circle at 100% 0,#dee1e6 7.5px,#fff 8px)"></div>
<svg class="a" style="left:573px;top:170px" width="18" height="17" viewBox="0 0 18 17"><defs><linearGradient id="fg" x1="0" y1="0" x2="0" y2="1"><stop offset="0" stop-color="#4b27d0"/><stop offset="1" stop-color="#7c66ea"/></linearGradient></defs><path d="M16.3,1.8c-0.500,1.300,-1.400,2,-2.700,2.200c-1.300,-1.100,-3,-1.700,-4.800,-1.500c-3.600,0.400,-6.200,3.400,-5.900,6.800c0.300,3.200,3.200,5.500,6.500,5.200c3.300,-0.300,5.900,-2.500,6.800,-5.600c0.700,-2.400,0.800,-4.800,0.100,-7.100z" fill="url(#fg)"/><circle cx="8.700" cy="8.900" r="3.500" fill="none" stroke="#fff" stroke-width="0.950"/><circle cx="8.500" cy="9" r="1.300" fill="none" stroke="#fff" stroke-width="0.850"/><path d="M10,7.800v2.100c0,1,1.900,0.900,2.100,-0.600" fill="none" stroke="#fff" stroke-width="0.850"/></svg>
<div class="t" style="left:599.0px;top:173.4px;font-size:12px;letter-spacing:-0.193px;color:#3c4043;">LayoutSample</div>
<svg class="a" style="left:782px;top:173px" width="10" height="10" fill="none" stroke="#3c4043" stroke-width="1.500"><path d="M1.700,1.700l6.600,6.600M8.300,1.700l-6.600,6.600"/></svg>
<svg class="a" style="left:818px;top:171px" width="14" height="14" fill="none" stroke="#3c4043" stroke-width="1.7"><path d="M7,1v12M1,7h12"/></svg>
<svg class="a" style="left:1600px;top:155px" width="170" height="24" fill="none" stroke="#111" stroke-width="1.1"><path d="M12,9.500l5,5l5,-5M58,12.500h10M104.500,7.500h9v9h-9z" stroke-linejoin="round"/><path d="M150,7l10,10M160,7l-10,10" stroke-width="1.300"/></svg>
<div class="a" style="left:555px;top:195px;width:1221px;height:43px;background:#fff;border-bottom:1px solid #dadce0"></div>
<div class="a" style="left:663px;top:199px;width:1007px;height:34px;border-radius:17px;background:#f1f3f4"></div>
<svg class="a" style="left:568px;top:207px" width="18" height="18" fill="none" stroke="#5f6368" stroke-width="2" stroke-linejoin="miter"><path d="M16,9H3M9,2.500l-6.500,6.500l6.500,6.500"/></svg>
<svg class="a" style="left:600px;top:207px" width="18" height="18" fill="none" stroke="#c4c7cb" stroke-width="2"><path d="M2,9h13M9,2.500l6.500,6.500l-6.500,6.500"/></svg>
<svg class="a" style="left:632px;top:207px" width="18" height="18" fill="none" stroke="#5f6368" stroke-width="2"><path d="M15,9a6,6 0 1 1 -2,-4.500"/><path d="M15.500,2v5h-5z" fill="#5f6368" stroke="none"/></svg>
<svg class="a" style="left:675px;top:208px" width="12" height="16"><rect x="1.500" y="6.500" width="9" height="8" rx="1" fill="#5f6368"/><path d="M3.500,7v-2.500a2.500,2.500 0 0 1 5,0v2.500" fill="none" stroke="#5f6368" stroke-width="1.500"/></svg>
<div class="t" style="left:697px;top:209.4px;font-size:14px;letter-spacing:-0.052px;color:#5f6368"><span style="color:#202124">localhost</span>:7169/App/MainPageFrame/LayoutSample/-</div>
<svg class="a" style="left:1580px;top:208px" width="17" height="17"><rect x="1" y="1" width="10.500" height="11" rx="1.500" fill="#5f6368"/><rect x="6.800" y="5.200" width="8.600" height="10.300" rx="1.200" fill="#f1f3f4" stroke="#6b7075" stroke-width="1"/><path d="M8.700,13.800l2.400,-5.800l2.400,5.800M9.600,12h3" stroke="#5f6368" fill="none" stroke-width="0.900"/><path d="M7.300,6.300a2.300,2.300 0 1 0 0.600,1.500h-2" stroke="#e8eaed" fill="none" stroke-width="1"/></svg>
<svg class="a" style="left:1611px;top:207px" width="19" height="18" fill="none" stroke="#5f6368" stroke-width="1.250"><path d="M2.600,6.500v9h11.200v-2.700"/><path d="M5.400,12.300c0.500,-3.600,2.600,-5.600,6.200,-5.700v-3.100l5,4.600l-5,4.600v-3c-2.700,0,-4.500,0.700,-6.200,2.600z" stroke-linejoin="round"/></svg>
<svg class="a" style="left:1644px;top:208px" width="16" height="16" fill="none" stroke="#5f6368" stroke-width="1.350"><path d="M8,1.600l1.900,4.300l4.700,0.450l-3.550,3.100l1.050,4.600l-4.100,-2.450l-4.100,2.450l1.050,-4.600l-3.550,-3.100l4.700,-0.450z" stroke-linejoin="round"/></svg>
<svg class="a" style="left:1684px;top:208px" width="16" height="16"><rect x="2" y="2" width="12" height="12" fill="none" stroke="#5f6368" stroke-width="2"/><rect x="9" y="2" width="5" height="12" fill="#5f6368"/></svg>
<svg class="a" style="left:1712px;top:204px" width="24" height="24"><circle cx="12" cy="12" r="11" fill="#dee1e6"/><circle cx="12" cy="9" r="3.300" fill="#4a5568"/><path d="M5,18c0.500,-3,3.500,-4.300,7,-4.300s6.500,1.300,7,4.300z" fill="#4a5568"/></svg>
<svg class="a" style="left:1753px;top:208px" width="7" height="18" fill="#5f6368"><circle cx="3.400" cy="3.800" r="1.600"/><circle cx="3.400" cy="8.600" r="1.600"/><circle cx="3.400" cy="13.400" r="1.600"/></svg>
<div class="a" style="left:555px;top:238px;width:1221px;height:964px;background:#fff;overflow:hidden"><div class="a" style="left:-555px;top:-238px;width:1776px;height:1202px">
<div class="a" style="left:555px;top:238px;width:250px;height:964px;background:linear-gradient(180deg,#052767 0%,#3a0647 70%)"></div>
<div class="a" style="left:555px;top:238px;width:250px;height:56px;background:rgba(0,0,0,.4)"></div>
<div class="t" style="left:583.5px;top:258.1px;font-size:17.6px;letter-spacing:-0.062px;color:#fff;">Home</div>
<div class="a" style="left:571px;top:310px;width:218px;height:47.500px;border-radius:4px;background:rgba(255,255,255,.255)"></div>
<div class="t" style="left:587.0px;top:327.0px;font-size:14.4px;color:#fff;">Layout</div>
<div class="t" style="left:587.0px;top:383.0px;font-size:14.4px;color:#d7d7d7;">Script</div>
<div class="t" style="left:587.0px;top:439.0px;font-size:14.4px;color:#d7d7d7;">DB(SQLite)</div>
<div class="t" style="left:587.0px;top:495.0px;font-size:14.4px;color:#d7d7d7;">ProCode</div>
<svg class="a" style="left:761px;top:438px" width="10" height="16" fill="none" stroke="#d7d7d7" stroke-width="1.400"><path d="M1.500,1.500l6.500,6.500l-6.500,6.500"/></svg>
<svg class="a" style="left:761px;top:494px" width="10" height="16" fill="none" stroke="#d7d7d7" stroke-width="1.400"><path d="M1.500,1.500l6.500,6.500l-6.500,6.500"/></svg>
<div class="card" style="left:849px;top:200px;width:888px;height:558px"></div>
<div class="card" style="left:849px;top:830px;width:888px;height:500px"></div>
<div class="t" style="left:879.0px;top:253.0px;font-size:28px;letter-spacing:-0.076px;color:#212529;">Canvas Layout</div>
<div class="t" style="left:878.5px;top:849.3px;font-size:28px;color:#212529;">Grid Layout</div>
<svg class="a" style="left:880px;top:300px" width="500" height="300" viewBox="880 300 500 300"><use href="#car"/></svg>
<div class="cb" style="left:870px;top:355px"></div>
<div class="p" style="left:893.8px;top:354.9px;font-size:16px;">Side mirror × 2</div>
<div class="cb" style="left:1087px;top:340px"></div>
<div class="p" style="left:1111.0px;top:339.9px;font-size:16px;">Body scratches</div>
<div class="cb" style="left:1217px;top:543px"></div>
<div class="p" style="left:1241.0px;top:543.1px;font-size:16px;">Tire × 4</div>
<div class="cb" style="left:969px;top:564px"></div>
<div class="p" style="left:993.0px;top:564.2px;font-size:16px;">Number</div>
<div class="p" style="left:1009.0px;top:610.1px;font-size:16px;">Check date time</div>
<div class="inp" style="left:973px;top:636px;width:199px;height:38px"></div>
<div class="p" style="left:986.0px;top:646.9px;font-size:16px;">2024/03/08 02<span style="letter-spacing:1.3px">:</span>46</div>
<svg class="a" style="left:1142.5px;top:647px" width="14" height="15"><path d="M1.500,2.500h11v11h-11z" fill="none" stroke="#111" stroke-width="1.400"/><path d="M1,2h12v3.500h-12z" fill="#111"/><path d="M4,0.500v2M10,0.500v2" stroke="#111" stroke-width="1.500"/></svg>
<div class="a" style="left:1355px;top:300px;width:365px;height:440px;overflow:hidden"><div class="a" style="left:-1355px;top:-300px;width:1776px;height:1202px">
<svg class="a" style="left:1390px;top:310px" width="340" height="300" viewBox="1390 310 340 300">
<defs><pattern id="dots" x="1571.3" y="324.500" width="6.150" height="6.150" patternUnits="userSpaceOnUse"><circle cx="1.600" cy="1.600" r="1.500" fill="#000"/></pattern></defs>
<path d="M1564.1,325.6 L1564.7,353.7 L1565.3,384.9 L1549.7,396.1 L1535.4,407.3 L1542.9,442.3 L1558.5,431.7 L1575.9,421.7 L1576.2,421.7 L1592.5,431.7 L1611.2,443.5 L1618.7,409.2 L1601.2,396.1 L1588.5,384.9 L1589.3,372.4 L1591.2,347.4 L1591.8,323.5Z" fill="url(#dots)"/>
<g fill="none" stroke="#000" stroke-width="6.800" stroke-linecap="round" stroke-linejoin="round">
<path d="M1441.4,435.4 C1442.8,431.8 1446.6,421.0 1449.9,413.6 C1453.2,406.2 1457.0,398.2 1461.1,391.1 C1465.3,384.0 1470.1,377.0 1474.9,371.1 C1479.6,365.3 1485.2,359.9 1489.8,356.2 C1494.4,352.5 1498.1,350.6 1502.3,348.9 C1506.5,347.2 1510.6,346.0 1514.8,345.9 C1518.9,345.9 1523.5,346.8 1527.3,348.7 C1531.0,350.6 1534.6,354.1 1537.2,357.4 C1539.8,360.7 1541.5,364.7 1542.9,368.6 C1544.2,372.6 1544.7,376.6 1545.4,381.1 C1546.0,385.7 1546.4,393.6 1546.6,396.1"/>
<path d="M1436.8,447.9 C1435.2,452.1 1430.4,464.6 1427.3,473.3 C1424.1,481.9 1420.8,491.0 1417.9,499.9 C1415.1,508.8 1412.0,518.7 1410.0,526.5 C1408.0,534.3 1406.7,540.3 1406.0,546.5 C1405.2,552.7 1404.9,558.9 1405.3,563.8 C1405.7,568.6 1406.7,572.4 1408.6,575.7 C1410.5,579.1 1412.6,581.5 1416.6,583.7 C1420.6,585.9 1425.9,587.8 1432.6,589.1 C1439.2,590.3 1448.1,590.9 1456.5,591.1 C1465.0,591.2 1474.3,590.4 1483.2,589.7 C1492.0,589.1 1503.1,588.3 1509.8,587.1 C1516.4,585.8 1519.5,584.1 1523.1,582.4 C1526.6,580.7 1529.7,578.0 1531.1,577.1"/>
<path d="M1531.0,376.1 C1531.0,378.6 1530.4,385.5 1530.8,391.1 C1531.1,396.7 1531.8,403.6 1532.9,409.8 C1534.0,416.1 1535.8,422.7 1537.2,428.5 C1538.7,434.4 1541.1,442.9 1541.6,444.8 C1542.1,446.7 1539.8,437.9 1540.4,440.0 C1541.0,442.1 1543.8,451.1 1545.0,457.3 C1546.3,463.5 1547.8,471.3 1547.7,477.3 C1547.6,483.3 1545.8,489.0 1544.4,493.2 C1542.9,497.4 1540.2,494.8 1539.1,502.5 C1537.9,510.3 1538.3,529.8 1537.7,539.8 C1537.2,549.8 1536.1,558.7 1535.7,562.4"/>
<path d="M1481.2,550.5 C1482.2,549.1 1484.8,544.5 1487.2,542.5 C1489.5,540.5 1492.3,539.6 1495.1,538.5 C1498.0,537.4 1502.9,536.3 1504.5,535.8"/>
<path d="M1564.1,325.6 L1564.7,353.7 L1565.3,384.9 L1549.7,396.1 L1535.4,407.3"/>
<path d="M1591.8,323.5 L1591.2,347.4 L1589.3,372.4 L1588.5,384.9 L1601.2,396.1 L1618.7,409.2"/>
<path d="M1542.9,442.3 L1558.5,431.7 L1575.9,421.7 L1576.2,421.7 L1592.5,431.7 L1611.2,443.5"/>
<path d="M1606.2,397.3 C1606.4,394.4 1606.6,385.3 1607.4,379.9 C1608.3,374.5 1609.1,369.5 1611.2,364.9 C1613.3,360.3 1616.4,355.4 1619.9,352.4 C1623.4,349.4 1628.2,347.9 1632.4,346.8 C1636.6,345.8 1640.7,345.6 1644.9,346.2 C1649.0,346.8 1653.2,348.1 1657.3,350.6 C1661.5,353.0 1665.7,356.9 1669.8,361.2 C1674.0,365.4 1678.1,370.3 1682.3,376.1 C1686.5,382.0 1691.0,389.2 1694.8,396.1 C1698.5,403.0 1701.9,410.8 1704.8,417.3 C1707.7,423.9 1711.0,432.4 1712.3,435.4"/>
<path d="M1716.6,447.9 C1717.1,449.9 1719.2,458.0 1719.7,460.0 C1720.3,462.0 1718.8,456.0 1720.0,460.0 C1721.2,464.0 1725.9,479.9 1727.0,483.9"/>
<path d="M1622.2,376.1 C1622.3,378.4 1623.2,384.7 1623.0,389.9 C1622.9,395.1 1622.1,401.5 1621.2,407.3 C1620.2,413.2 1618.8,419.0 1617.4,424.8 C1616.1,430.6 1613.4,439.7 1613.0,442.3 C1612.7,444.8 1615.5,438.2 1615.2,440.0 C1614.9,441.8 1612.4,449.6 1611.3,453.3 C1610.1,457.0 1609.0,460.5 1608.6,462.0"/>
<path d="M1606.2,475.9 C1606.3,477.7 1606.0,483.0 1606.6,486.6 C1607.2,490.1 1608.8,491.7 1609.9,497.2 C1611.0,502.8 1612.5,513.5 1613.3,519.9 C1614.0,526.2 1614.0,529.6 1614.6,535.2 C1615.1,540.7 1615.6,547.2 1616.6,553.1 C1617.6,559.0 1618.8,565.8 1620.6,570.4 C1622.3,575.1 1624.1,578.4 1627.2,581.1 C1630.3,583.7 1633.2,585.0 1639.2,586.4 C1645.2,587.8 1654.7,588.9 1663.2,589.7 C1671.6,590.5 1680.3,591.1 1689.8,591.1 C1699.2,591.1 1711.1,590.3 1720.0,589.7 C1728.9,589.2 1739.2,588.1 1743.0,587.7"/>
<path d="M1672.5,550.5 C1671.6,549.1 1669.8,545.1 1667.2,542.5 C1664.5,539.8 1660.3,536.7 1656.5,534.5 C1652.7,532.3 1646.5,530.1 1644.5,529.2"/>
</g></svg>
<div class="p" style="left:1443.0px;top:466.1px;font-size:16px;">Left info</div>
<div class="p" style="left:1635.0px;top:464.5px;font-size:16px;">Right Info</div>
<div class="inp" style="left:1361px;top:502px;width:200px;height:38px"></div>
<div class="inp" style="left:1599px;top:497px;width:199px;height:38px"></div>
<div class="inp" style="left:1392px;top:599px;width:199px;height:38px"></div>
<div class="p" style="left:1405.0px;top:610.1px;font-size:16px;">2024/03/08 02<span style="letter-spacing:1.3px">:</span>46</div>
<svg class="a" style="left:1561px;top:610px" width="14" height="15"><path d="M1.500,2.500h11v11h-11z" fill="none" stroke="#111" stroke-width="1.400"/><path d="M1,2h12v3.500h-12z" fill="#111"/><path d="M4,0.500v2M10,0.500v2" stroke="#111" stroke-width="1.500"/></svg>
<div class="p" style="left:1613.3px;top:607.5px;font-size:16px;">Diagnosis</div>
<div class="inp" style="left:1391px;top:644px;width:400px;height:85.500px"></div>
</div></div>
<div class="a" style="left:1647px;top:250px;width:111px;height:40px;background:rgba(236,238,243,.72)"></div>
<div class="t" style="left:1659.7px;top:261.5px;font-size:16px;letter-spacing:-0.057px;color:#5f6368;">Trial version</div>
<div class="p" style="left:878.0px;top:909.3px;font-size:16px;">Los Angeles (California)</div>
<div class="p" style="left:1361.3px;top:909.3px;font-size:16px;">Chicago (Illinois)</div>
<table class="g" style="left:877.5px;top:933px;width:358.5px"><colgroup><col style="width:50.5px"><col style="width:121px"><col style="width:187px"></colgroup><tr><th></th><th>No</th><th>Type</th></tr><tr class="r"><td class="c" style="height:57px"><div class="cb" style="position:relative;left:8px;top:-1px"></div></td><td>4ABC123</td><td>Ford Mustang</td></tr><tr class="r"><td class="c" style="height:57px"><div class="cb" style="position:relative;left:8px;top:-1px"></div></td><td>7XYZ890</td><td>Chevrolet Camaro</td></tr><tr class="r"><td class="c" style="height:57px"><div class="cb" style="position:relative;left:8px;top:-1px"></div></td><td>1JKL234</td><td>Tesla Model S</td></tr><tr class="r"><td class="c" style="height:57px"><div class="cb" style="position:relative;left:8px;top:-1px"></div></td><td>5MNO567</td><td>Dodge Charger</td></tr><tr class="r"><td class="c" style="height:57px"><div class="cb" style="position:relative;left:8px;top:-1px"></div></td><td>9PQR123</td><td>Toyota Camry</td></tr></table>
<table class="g" style="left:1361.3px;top:933px;width:357.5px"><colgroup><col style="width:49.7px"><col style="width:106px"><col style="width:201.8px"></colgroup><tr><th></th><th>No</th><th>Type</th></tr><tr class="r"><td class="c" style="height:81px"><div class="cb" style="position:relative;left:8px;top:-1px"></div></td><td>1LMN012</td><td>Mercedes-Benz C-<br>Class</td></tr><tr class="r"><td class="c" style="height:57px"><div class="cb" style="position:relative;left:8px;top:-1px"></div></td><td>2OPQ345</td><td>Audi A4</td></tr><tr class="r"><td class="c" style="height:57px"><div class="cb" style="position:relative;left:8px;top:-1px"></div></td><td>3RST567</td><td>Lexus RX</td></tr><tr class="r"><td class="c" style="height:57px"><div class="cb" style="position:relative;left:8px;top:-1px"></div></td><td>4UVW890</td><td>Volkswagen Jetta</td></tr><tr class="r"><td class="c" style="height:57px"><div class="cb" style="position:relative;left:8px;top:-1px"></div></td><td>5XYZ123</td><td>BMW X5</td></tr></table>
<div class="btn" style="left:1283px;top:1069px">&gt;&gt;</div>
<div class="btn" style="left:1283px;top:1123px">&lt;&lt;</div>
<div class="a" style="left:1761px;top:238px;width:15px;height:964px;background:#f1f1f1"></div>
<div class="a" style="left:1763px;top:300px;width:13px;height:445px;background:#c1c1c1"></div>
<div class="tri" style="left:1764.500px;top:243.500px;border-width:0 4px 4.500px 4px;border-color:transparent transparent #505050 transparent"></div>
<div class="tri" style="left:1764.500px;top:1190px;border-width:4.500px 4px 0 4px;border-color:#505050 transparent transparent transparent"></div>
</div></div>
</div></div>
</body>
</html>
